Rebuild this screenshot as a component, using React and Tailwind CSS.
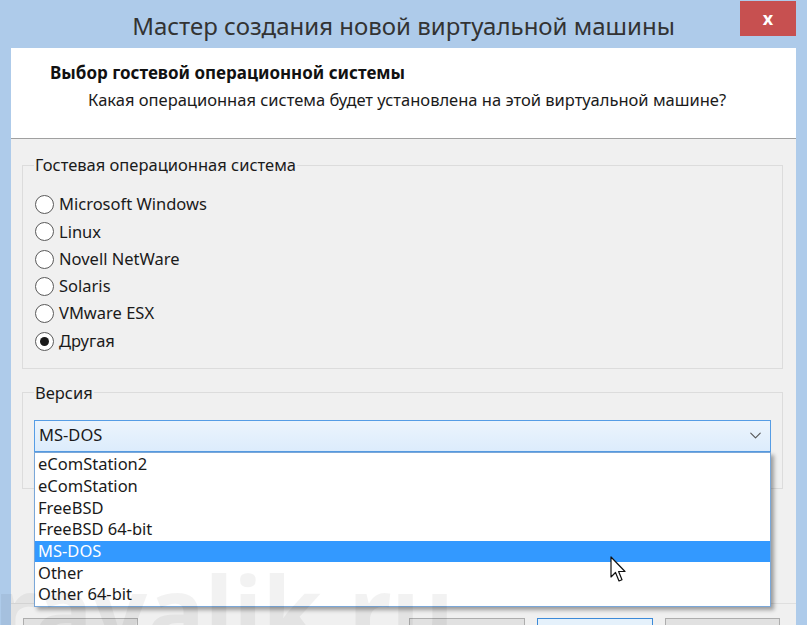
import { ChevronDown } from "lucide-react";

const osList = ["Microsoft Windows", "Linux", "Novell NetWare", "Solaris", "VMware ESX", "Другая"];
const versions = ["eComStation2", "eComStation", "FreeBSD", "FreeBSD 64-bit", "MS-DOS", "Other", "Other 64-bit"];

function Radio({ label, checked }) {
  return (
    <div className="flex h-[27.3px] items-center">
      <span className="ml-[1px] flex h-[19px] w-[19px] items-center justify-center rounded-full border border-[#5a5a5a] bg-white">
        {checked && <span className="h-[9px] w-[9px] rounded-full bg-[#1a1a1a]" />}
      </span>
      <span className="ml-[5px] text-[16.5px] text-[#1a1a1a]">{label}</span>
    </div>
  );
}

function Cursor() {
  return (
    <svg width="18" height="28" viewBox="0 0 18 28" className="absolute left-[610px] top-[556px]">
      <path d="M1 1 L1 21 L5.5 16.5 L9 25 L12 23.8 L8.6 15.5 L15 15.5 Z" fill="white" stroke="#111" strokeWidth="1.2" strokeLinejoin="round" />
    </svg>
  );
}

export default function App() {
  return (
    <div
      className="relative flex h-[625px] w-[807px] flex-col overflow-hidden bg-[#aecbea]"
      style={{ fontFamily: '"Noto Sans", "Open Sans", sans-serif' }}
    >
      <div className="grid h-[48px] grid-cols-[1fr_auto_1fr]">
        <div />
        <div className="pt-[8px] text-[24px] leading-[36px] text-[#333]">Мастер создания новой виртуальной машины</div>
        <div className="flex justify-end pr-[11px] pt-[1px]">
          <div className="flex h-[35px] w-[56px] items-center justify-center bg-[#c75050] text-[18px] font-bold text-white">
            x
          </div>
        </div>
      </div>

      <div className="mx-[11px] flex flex-1 flex-col bg-[#f0f0f0]">
        <div className="h-[91px] border-b border-[#a0a0a0] bg-white pl-[39px] pt-[13px]">
          <div className="text-[17px] font-bold leading-[24px] text-[#111]">Выбор гостевой операционной системы</div>
          <div className="pl-[38px] pt-[3px] text-[16.5px] leading-[24px] text-[#1a1a1a]">
            Какая операционная система будет установлена на этой виртуальной машине?
          </div>
        </div>

        <fieldset className="ml-[11px] mr-[13px] mt-[16px] border border-[#dcdcdc] pb-[13px]">
          <legend className="ml-[11px] px-[1px] text-[16.5px] leading-[20px] text-[#1a1a1a]">Гостевая операционная система</legend>
          <div className="pl-[11px] pt-[16px]">
            {osList.map((os) => (
              <Radio key={os} label={os} checked={os === "Другая"} />
            ))}
          </div>
        </fieldset>

        <fieldset className="ml-[11px] mr-[13px] mt-[14px] border border-[#dcdcdc] px-[11px] pb-[36px]">
          <legend className="px-[1px] text-[16.5px] leading-[20px] text-[#1a1a1a]">Версия</legend>
          <div className="relative mt-[17px]">
            <div className="flex h-[32px] items-center justify-between border border-[#569de5] bg-gradient-to-b from-[#ecf4fc] to-[#dcecfc] pl-[4px] pr-[5px]">
              <span className="text-[16.5px] text-[#1a1a1a]">MS-DOS</span>
              <ChevronDown size={19} strokeWidth={1.4} className="text-[#555]" />
            </div>
            <div className="absolute left-0 right-0 top-full z-10 border border-[#7aa7d8] bg-white pt-[1px] shadow-[3px_3px_4px_rgba(0,0,0,0.35)]">
              {versions.map((v) => (
                <div
                  key={v}
                  className={
                    v === "MS-DOS"
                      ? "flex h-[21.7px] items-center bg-[#3399ff] pl-[3px] text-[16.5px] text-white"
                      : "flex h-[21.7px] items-center pl-[3px] text-[16.5px] text-[#1a1a1a]"
                  }
                >
                  {v}
                </div>
              ))}
            </div>
          </div>
        </fieldset>

        <div className="mt-auto h-[22px] border-t border-[#dfdfdf]">
          <div className="mt-[14px] flex pl-[12px]">
            <div className="h-[26px] w-[115px] border border-[#adadad] bg-[#e1e1e1]" />
            <div className="ml-[271px] h-[26px] w-[116px] border border-[#adadad] bg-[#e1e1e1]" />
            <div className="ml-[12px] h-[26px] w-[116px] border border-[#3c8ad8] bg-[#e5f1fb]" />
            <div className="ml-[12px] h-[26px] w-[115px] border border-[#adadad] bg-[#e1e1e1]" />
          </div>
        </div>
      </div>

      <div className="pointer-events-none absolute left-[-6px] top-[562px] z-20 text-[96px] font-bold leading-none text-black/[0.05]">
        ravalik.ru
      </div>
      <div className="z-30">
        <Cursor />
      </div>
    </div>
  );
}
